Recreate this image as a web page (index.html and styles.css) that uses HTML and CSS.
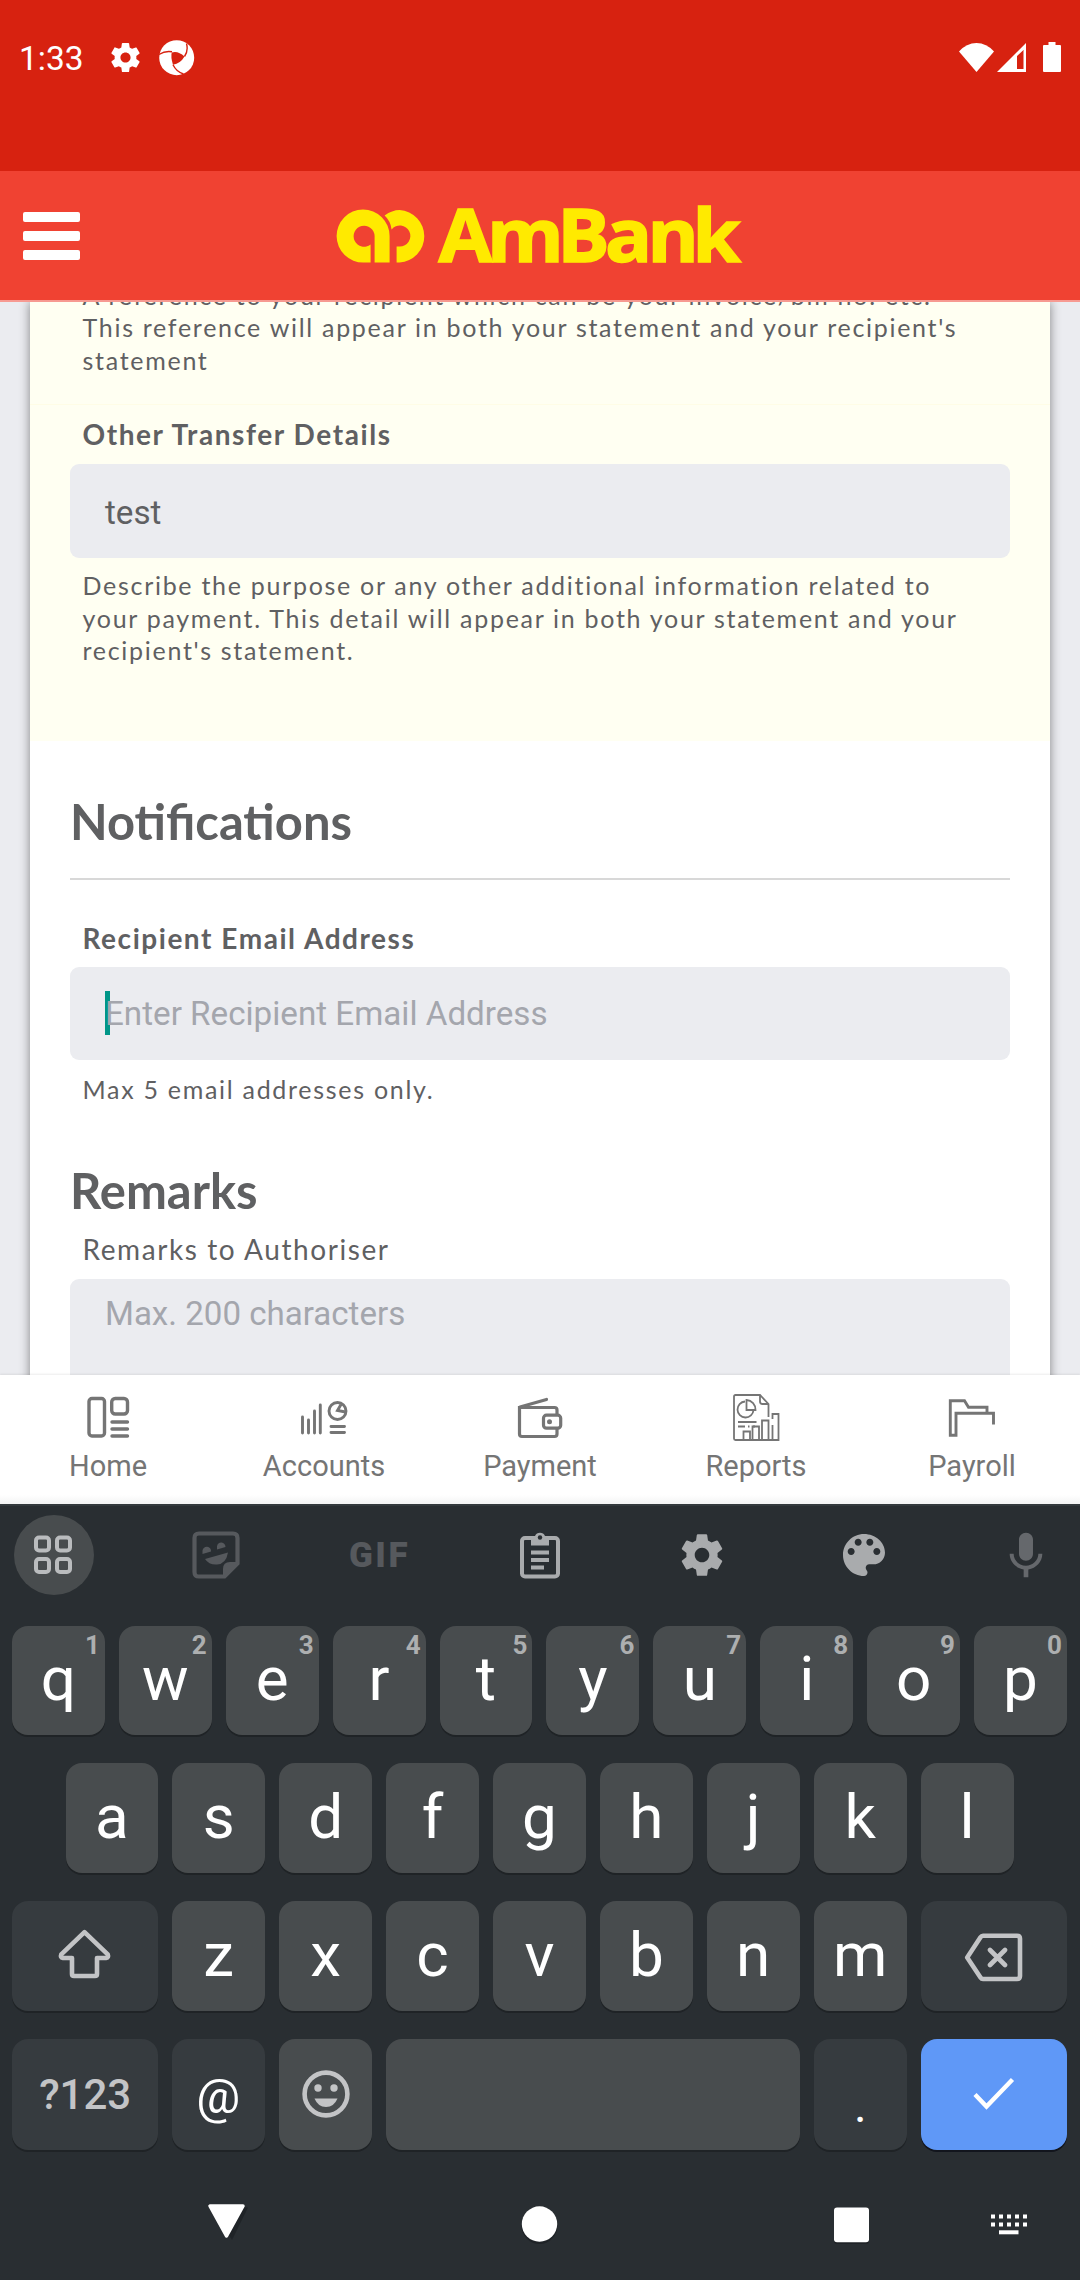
FILE: index.html
```html
<!DOCTYPE html>
<html lang="en">
<head>
<meta charset="utf-8">
<title>AmBank</title>
<link rel="stylesheet" href="styles.css">
</head>
<body>
<div class="screen">
  <div class="status">
    <span class="clock">1:33</span>
    <svg class="st-gear" viewBox="2 2 20 20"><path fill="#fff" d="M19.43 12.98c.04-.32.07-.64.07-.98s-.03-.66-.07-.98l2.11-1.65c.19-.15.24-.42.12-.64l-2-3.46c-.12-.22-.39-.3-.61-.22l-2.49 1c-.52-.4-1.08-.73-1.69-.98l-.38-2.65C14.46 2.18 14.25 2 14 2h-4c-.25 0-.46.18-.49.42l-.38 2.65c-.61.25-1.17.59-1.69.98l-2.49-1c-.23-.09-.49 0-.61.22l-2 3.46c-.13.22-.07.49.12.64l2.11 1.65c-.04.32-.07.65-.07.98s.03.66.07.98l-2.11 1.65c-.19.15-.24.42-.12.64l2 3.46c.12.22.39.3.61.22l2.49-1c.52.4 1.08.73 1.69.98l.38 2.65c.03.24.24.42.49.42h4c.25 0 .46-.18.49-.42l.38-2.65c.61-.25 1.17-.59 1.69-.98l2.49 1c.23.09.49 0 .61-.22l2-3.46c.12-.22.07-.49-.12-.64l-2.11-1.65zM12 15.5c-1.93 0-3.5-1.57-3.5-3.5s1.57-3.5 3.5-3.5 3.5 1.57 3.5 3.5-1.57 3.5-3.5 3.5z"/></svg>
    <svg class="st-app" viewBox="0 0 36 36"><circle cx="17.7" cy="17.7" r="17.5" fill="#fff"/><path d="M12.7 12.5Q19 10.500 25.500 16.500Q21.500 23.500 14 24.800Q11.600 18 12.700 12.500z" fill="#d72210"/><path d="M0 14.500Q6 10.600 13 11.800M25.500 16.500Q29.500 11 27.500 3.500M14 24.800Q17.500 32 24.500 34" fill="none" stroke="#d72210" stroke-width="1.400"/></svg>
    <span class="grow"></span>
    <svg class="st-wifi" viewBox="0 0 35 29"><path fill="#fff" d="M17.500 29L0 8.500Q7.500 0 17.500 0T35 8.500z"/></svg>
    <svg class="st-cell" viewBox="0 0 29 29"><path fill="#fff" fill-rule="evenodd" d="M0 29L29 0V29zM20 13v13h6.500V7z"/></svg>
    <svg class="st-batt" viewBox="0 0 18 30"><path fill="#fff" d="M5.500 0h7v3H17q1 0 1 1V29q0 1-1 1H1q-1 0-1-1V4q0-1 1-1h4.500z"/></svg>
  </div>

  <header class="appbar">
    <div class="menu"><i></i><i></i><i></i></div>
    <svg class="logo" viewBox="0 0 406 60">
      <g fill="#ffea00" transform="translate(.6 0)"><path d="M33 55V36.500A10.500 10.500 0 1 1 37 28V54.500H52V28A26.500 26.500 0 1 0 26 54.500H33z"/><path d="M47 7.500Q54.500 2 62 2A26.300 26.300 0 0 1 62 54.500H59V38.500H62A10.500 10.500 0 1 0 54 21.500Q53 13 47 7.500z"/></g>
      <text transform="scale(1.07 1)" x="94.900 140.200 205.900 250.500 290.200 332.200" y="54">AmBank</text>
    </svg>
  </header>

  <main class="page">
    <section class="card">
      <div class="details">
        <p class="help first">A reference to your recipient which can be your invoice/bill no. etc.<br>This reference will appear in both your statement and your recipient's<br>statement</p>
        <div class="row-line"></div>
        <label class="label">Other Transfer Details</label>
        <div class="field">test</div>
        <p class="help">Describe the purpose or any other additional information related to<br>your payment. This detail will appear in both your statement and your<br>recipient's statement.</p>
      </div>
      <div class="notify">
        <h2>Notifications</h2>
        <hr>
        <label class="label">Recipient Email Address</label>
        <div class="field email"><span class="caret"></span><span class="hint">Enter Recipient Email Address</span></div>
        <p class="help">Max 5 email addresses only.</p>
        <h2 class="remarks">Remarks</h2>
        <label class="label light">Remarks to Authoriser</label>
        <div class="area hint">Max. 200 characters</div>
      </div>
    </section>
  </main>

  <nav class="tabs">
    <div class="tab">
      <svg viewBox="0 0 48 48" stroke-width="3.400"><rect x="5" y="5.500" width="15.500" height="37.500" rx="3"/><rect x="27.700" y="5.500" width="15.800" height="15.500" rx="3.500"/><path stroke-linecap="round" d="M28 29h15.500M28 36h15.500M28 43h15.500"/></svg>
      <span>Home</span></div>
    <div class="tab">
      <svg viewBox="0 0 48 48" stroke-width="2.900"><path stroke-linecap="round" d="M2.500 24v16M8.500 27v13M14.500 18v22M20.300 12v28M31 33.500h13.500M31 39.500h13.500"/><circle cx="37.500" cy="18" r="8.500"/><path d="M41 11.500l-3.500 6 8 1.500"/></svg>
      <span>Accounts</span></div>
    <div class="tab">
      <svg viewBox="0 0 48 48" stroke-width="3.200"><path d="M41 21.500V17q0-2.500-2.500-2.500H3.500V41q0 2.500 2.500 2.500h32.500q2.500 0 2.500-2.500v-5.500"/><path stroke-linecap="round" d="M4 14L30.500 6.500"/><rect x="27.500" y="22.200" width="17.200" height="13" rx="3"/><circle cx="33.500" cy="28.700" r="2.500" fill="#757575" stroke="none"/></svg>
      <span>Payment</span></div>
    <div class="tab">
      <svg viewBox="0 0 48 48" stroke-width="1.800"><path d="M36.500 24V11L28 2H3.500Q2 2 2 3.500V45.500Q2 47 3.500 47H46.500V21H40.500V26M28 2v6.500q0 2.500 2.500 2.500h6M11.500 47v-8.500H18V47M20.500 47V33.500H27V47M30 47V27.500h6.500V47M40.500 47V32"/><path d="M13 8.500A8 8 0 1 0 21.500 17M14.500 7V17H23.500A9.500 9.500 0 0 0 14.500 7zM6 29h18.500M6 33.500h7M16 33.500h1.500M21 33.500h2"/></svg>
      <span>Reports</span></div>
    <div class="tab">
      <svg viewBox="0 0 48 48" stroke-width="2.900"><path d="M39 19.500V14.200H20.500L16.500 7.800H2.300V42.300H8V20.300H45.500V31.500"/></svg>
      <span>Payroll</span></div>
  </nav>

  <div class="keyboard">
    <div class="tools">
      <div class="tool round"><svg width="80" height="80" viewBox="0 0 80 80" fill="none" stroke="#babcbe" stroke-width="4"><rect x="22" y="22.500" width="13" height="13" rx="3"/><rect x="43" y="22.500" width="13" height="13" rx="3"/><rect x="22" y="44" width="13" height="13" rx="3"/><rect x="43" y="44" width="13" height="13" rx="3"/></svg></div>
      <div class="tool"><svg width="48" height="48" viewBox="0 0 48 48"><path d="M7 2.500H41Q45.500 2.500 45.500 7V32.500L32.500 45.500H7Q2.500 45.500 2.500 41V7Q2.500 2.500 7 2.500z" fill="none" stroke="#56595d" stroke-width="4.200"/><path d="M31 46V38Q31 31 38 31H46L33 46zM13 28L36 21.500Q34 33 25 33.500Q17 34 13 28zM10.500 23V19.500A4.200 4.200 0 0 1 19 20.500zM25 18.500V15.500A4.200 4.200 0 0 1 33.500 16z" fill="#56595d"/></svg></div>
      <div class="tool gif">GIF</div>
      <div class="tool"><svg width="48" height="48" viewBox="0 0 48 48"><rect x="6" y="7" width="36" height="38.500" rx="3" fill="none" stroke="#a9abad" stroke-width="4"/><path d="M15 5h4a5.500 5.500 0 0 1 10 0h4v9.500H15z" fill="#a9abad"/><circle cx="24" cy="6.500" r="2.200" fill="#292e32"/><path d="M15 21.500h18M15 29h18M15 36.500h13" stroke="#a9abad" stroke-width="4"/></svg></div>
      <div class="tool"><svg width="50" height="50" viewBox="0 0 24 24" fill="#a9abad"><path d="M19.430 12.980c.04-.32.07-.64.07-.98s-.03-.66-.07-.98l2.110-1.650c.19-.15.24-.42.12-.64l-2-3.460c-.12-.22-.39-.3-.61-.22l-2.490 1c-.52-.4-1.080-.73-1.690-.98l-.38-2.650C14.460 2.180 14.250 2 14 2h-4c-.25 0-.46.18-.49.42l-.38 2.650c-.61.25-1.170.59-1.690.98l-2.490-1c-.23-.09-.49 0-.61.22l-2 3.460c-.13.22-.07.49.12.64l2.110 1.650c-.04.32-.07.65-.07.98s.03.66.07.98l-2.110 1.650c-.19.15-.24.42-.12.64l2 3.460c.12.22.39.3.61.22l2.490-1c.52.4 1.080.73 1.690.98l.38 2.650c.03.24.24.42.49.42h4c.25 0 .46-.18.49-.42l.38-2.650c.61-.25 1.170-.59 1.690-.98l2.490 1c.23.09.49 0 .61-.22l2-3.460c.12-.22.07-.49-.12-.64l-2.110-1.650zM12 15.500c-1.930 0-3.500-1.570-3.500-3.500s1.570-3.500 3.500-3.500 3.500 1.570 3.500 3.500-1.570 3.500-3.500 3.500z"/></svg></div>
      <div class="tool"><svg width="56" height="56" viewBox="0 0 24 24" fill="#a9abad"><path d="M12 3c-4.970 0-9 4.030-9 9s4.030 9 9 9c.83 0 1.500-.67 1.500-1.500 0-.39-.15-.74-.39-1.010-.23-.26-.38-.61-.38-.99 0-.83.67-1.500 1.500-1.500H16c2.760 0 5-2.240 5-5 0-4.420-4.030-8-9-8zm-5.500 9c-.83 0-1.500-.67-1.500-1.500S5.670 9 6.500 9 8 9.670 8 10.500 7.330 12 6.500 12zm3-4C8.670 8 8 7.330 8 6.500S8.670 5 9.500 5s1.500.67 1.500 1.500S10.330 8 9.500 8zm5 0c-.83 0-1.500-.67-1.500-1.500S13.670 5 14.500 5s1.500.67 1.500 1.500S15.330 8 14.500 8zm3 4c-.83 0-1.500-.67-1.500-1.500S16.670 9 17.500 9s1.500.67 1.500 1.500-.67 1.500-1.500 1.500z"/></svg></div>
      <div class="tool"><svg width="56" height="56" viewBox="0 -.5 24 24" fill="#65686c"><path d="M12 14c1.660 0 2.990-1.340 2.990-3L15 5c0-1.660-1.340-3-3-3S9 3.340 9 5v6c0 1.660 1.340 3 3 3zm5.300-3c0 3-2.540 5.100-5.300 5.100S6.700 14 6.700 11H5c0 3.410 2.720 6.230 6 6.720V21h2v-3.280c3.280-.48 6-3.300 6-6.720h-1.700z"/></svg></div>
    </div>
    <div class="keys">
      <div class="krow r1">
        <div class="key">q<sup>1</sup></div><div class="key">w<sup>2</sup></div><div class="key">e<sup>3</sup></div><div class="key">r<sup>4</sup></div><div class="key">t<sup>5</sup></div><div class="key">y<sup>6</sup></div><div class="key">u<sup>7</sup></div><div class="key">i<sup>8</sup></div><div class="key">o<sup>9</sup></div><div class="key">p<sup>0</sup></div>
      </div>
      <div class="krow r2">
        <div class="key">a</div><div class="key">s</div><div class="key">d</div><div class="key">f</div><div class="key">g</div><div class="key">h</div><div class="key">j</div><div class="key">k</div><div class="key">l</div>
      </div>
      <div class="krow r3">
        <div class="key dark wide"><svg width="56" height="56" viewBox="0 0 56 56" fill="none" stroke="#c3c4c6" stroke-width="4.600" stroke-linejoin="round"><path d="M27.500 6.200L4.300 28.300Q3 31.500 6 32H15V48Q15 50 17 50H38Q40 50 40 48V32H49Q52 31.500 50.700 28.300z"/></svg></div>
        <div class="key">z</div><div class="key">x</div><div class="key">c</div><div class="key">v</div><div class="key">b</div><div class="key">n</div><div class="key">m</div>
        <div class="key dark wide del"><svg width="60" height="52" viewBox="0 0 60 52" fill="none" stroke="#c3c4c6" stroke-width="4.600" stroke-linejoin="round" stroke-linecap="round"><path d="M19 5.800H53Q56 5.800 56 8.800V46Q56 49 53 49H19Q17.500 49 16.500 47.500L3.200 27.400L16.500 7.300Q17.500 5.800 19 5.800zM26 20l15 15M41 20l-15 15"/></svg></div>
      </div>
      <div class="krow r4">
        <div class="key dark wide sym">?123</div>
        <div class="key dark at">@</div>
        <div class="key smile"><svg width="48" height="48" viewBox="0 0 48 48"><circle cx="24" cy="24" r="21.400" fill="none" stroke="#c3c4c6" stroke-width="4.600"/><circle cx="16" cy="18" r="3.700" fill="#c3c4c6"/><circle cx="32" cy="18" r="3.700" fill="#c3c4c6"/><path d="M12.500 28.500H35.500Q32 37 24 37T12.500 28.500z" fill="#c3c4c6"/></svg></div>
        <div class="key space"></div>
        <div class="key dark dot">.</div>
        <div class="key blue wide"><svg width="42" height="34" viewBox="0 0 42 34" fill="none" stroke="#fff" stroke-width="4.400"><path d="M2 17.500L13.500 29.500L39.500 2.500"/></svg></div>
      </div>
    </div>
    <div class="sysnav">
      <svg viewBox="0 0 1080 60"><path d="M211 7.500H248L232 40z" fill="#1f2327"/><path d="M210 6H243L226.500 36z" fill="#fff" stroke="#fff" stroke-width="3.500" stroke-linejoin="round"/><circle cx="539.500" cy="26" r="18" fill="#1f2327"/><circle cx="539.500" cy="24" r="17.700" fill="#fff"/><rect x="834" y="9" width="35" height="35" rx="3" fill="#1f2327"/><rect x="834" y="7.500" width="35" height="34.700" rx="3" fill="#fff"/><path d="M991 16.500h36M991 24.500h36" stroke="#fff" stroke-width="4" stroke-dasharray="4 4"/><path d="M999 32.300h19.500" stroke="#fff" stroke-width="4"/></svg>
    </div>
  </div>
</div>
</body>
</html>
```

FILE: styles.css
```css
* { box-sizing: border-box; }
body { margin: 0; background: #292e32; }
.screen { width: 1080px; height: 2280px; overflow: hidden; display: flex; flex-direction: column; font-family: Roboto, sans-serif; }
svg { display: block; flex: none; }
.grow { flex: 1; }

/* status bar */
.status { height: 171px; background: #d72210; display: flex; align-items: flex-start; padding: 40px 19px 0 19px; color: #fff; }
.clock { font-size: 33.500px; line-height: 37px; width: 92px; white-space: nowrap; }
.st-gear { width: 29px; height: 29px; margin: 3px 19px 0 0; }
.st-app { width: 36px; height: 36px; }
.st-wifi { width: 35px; height: 29px; margin: 3px 3px 0 0; }
.st-cell { width: 29px; height: 29px; margin: 3px 17px 0 0; }
.st-batt { width: 18px; height: 30px; margin-top: 2px; }

/* header */
.appbar { height: 131px; background: #f04232; border-bottom: 2px solid #f79a92; display: flex; align-items: flex-start; padding: 40px 0 0 23px; }
.menu { width: 57px; display: flex; flex-direction: column; gap: 9px; padding-top: .5px; }
.menu i { height: 10px; background: #fff; border-radius: 2px; }
.logo { width: 406px; height: 60px; margin: -3px 0 0 257px; overflow: visible; }
.logo text { font: 700 73px "Open Sans", sans-serif; fill: #ffea00; stroke: #ffea00; stroke-width: 1.500px; }

/* form */
.page { height: 1073px; background: #ebecf0; overflow: hidden; padding: 0 30px; }
.card { height: 1200px; background: #fff; box-shadow: 0 0 10px rgba(0, 0, 0, .45); color: #5f6062; font-family: Lato, sans-serif; }
.details { height: 439px; background: #fffff2; padding: 0 40px; display: flow-root; }
.notify { padding: 51px 40px 0; }
.help { margin: 11px 0 0 12.500px; font-size: 25px; line-height: 32.500px; letter-spacing: 1.710px; white-space: nowrap; }
.help.first { margin-top: -23.500px; }
.row-line { height: 1px; margin: 28px -40px 0; background: #fffde6; }
.label { display: block; margin: 12px 0 13px 12.500px; font-size: 28px; font-weight: 700; line-height: 34px; letter-spacing: 1.580px; white-space: nowrap; }
.field { height: 94px; padding: 2px 35px 0; border-radius: 9px; background: #ebecf0; font-family: Roboto, sans-serif; font-size: 33.200px; display: flex; align-items: center; }
.hint { color: #a4a6ad; }
.email { height: 93px; padding-top: 0; }
.caret { width: 5px; height: 44px; background: #009688; margin: -2px -5px 0 0; }
h2 { margin: 0; font-size: 48.900px; line-height: 58px; font-weight: 700; }
hr { margin: 28px 0 41px; border: 0; height: 2px; background: #d8d8d8; }
hr + .label { margin-bottom: 12px; letter-spacing: 1.540px; }
.email + .help { margin-top: 13px; }
.remarks { margin-top: 55px; }
.light { font-weight: 400; margin-top: 13px; }
.area { height: 150px; padding: 15px 35px; border-radius: 9px; background: #ebecf0; font: 33.100px/40px Roboto, sans-serif; }

/* tabs */
.tabs { height: 129px; background: linear-gradient(#fff 120px, #f3f4f4 129px); display: grid; grid-template-columns: repeat(5, 1fr); box-shadow: 0 -1px 2px rgba(0, 0, 0, .08); position: relative; }
.tab { display: flex; flex-direction: column; align-items: center; padding-top: 18px; color: #757575; font-size: 29px; line-height: 34px; }
.tab svg { width: 48px; height: 48px; margin-bottom: 8px; fill: none; stroke: #757575; }

/* keyboard */
.keyboard { flex: 1; background: #292e32; border-top: 2px solid #33393d; display: flex; flex-direction: column; position: relative; }
.tools { height: 120px; padding: 9px 14px 0; display: flex; justify-content: space-between; }
.tool { width: 80px; height: 80px; display: flex; align-items: center; justify-content: center; }
.round { border-radius: 50%; background: #484c4e; }
.gif { color: #56595d; font: 900 35px Roboto, sans-serif; letter-spacing: 2.500px; padding-left: 3px; }
.keys { display: flex; flex-direction: column; gap: 28px; padding: 0 12px; }
.krow { display: flex; gap: 14px; height: 110px; }
.r1 { height: 109px; }
.r2 { padding-left: 53.500px; }
.r4 { height: 111px; }
.key { width: 92.900px; border-radius: 16px; background: #484c4e; box-shadow: 0 2px 0 #1f2326; color: #fff; font-size: 62px; display: flex; align-items: center; justify-content: center; padding-bottom: 4px; position: relative; }
.key sup { position: absolute; top: 4px; right: 5px; font-size: 26px; line-height: 30px; font-weight: 700; color: #adafb0; }
.dark { background: #363b3f; }
.wide { width: 146.300px; }
.space { width: 413.800px; }
.blue { background: #5f98f7; box-shadow: 0 2px 0 #12151d; padding-bottom: 2px; }
.sym { color: #c3c4c6; font-size: 42px; font-weight: 500; padding-bottom: 0; }
.del { padding-bottom: 1px; }
.smile { padding-bottom: 2px; }
.at { font-size: 49px; padding: 4px 1px 0 0; }
.dot { font-size: 48px; padding: 22px 0 0; }
.sysnav { height: 60px; margin-top: 50px; }
```
